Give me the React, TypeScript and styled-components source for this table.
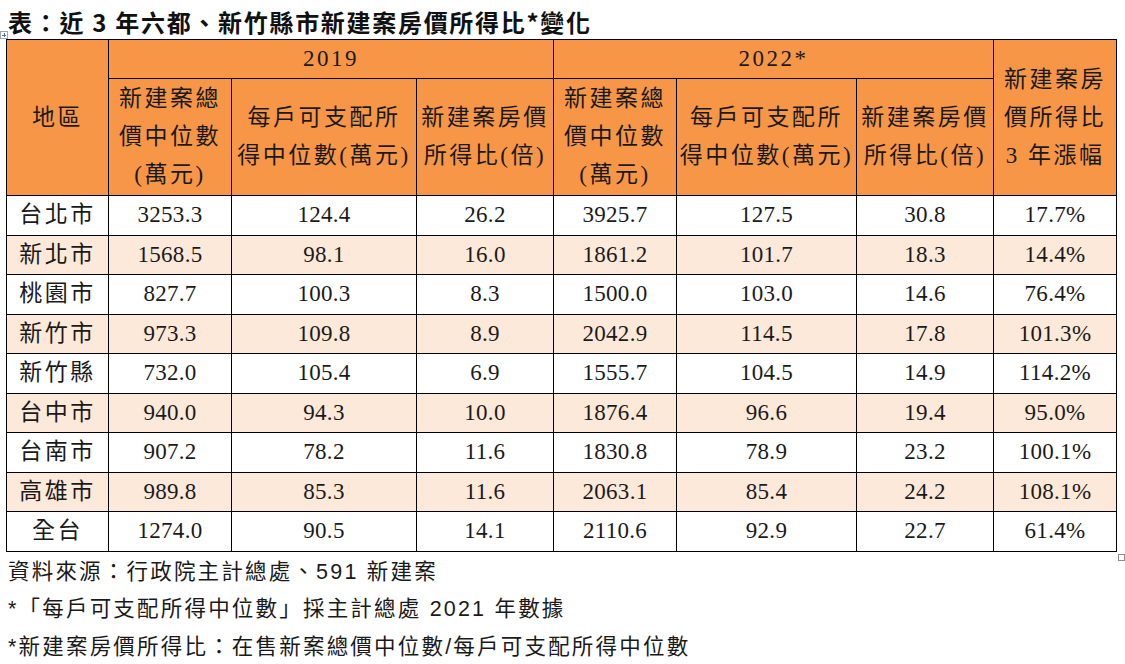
import React from "react";
import styled, { createGlobalStyle } from "styled-components";

const Global = createGlobalStyle`
  html, body { margin: 0; padding: 0; background: #fff; }
  body { width: 1125px; height: 664px; overflow: hidden; }
`;

const serif = `"Liberation Serif", "Noto Sans CJK TC", serif`;

const Page = styled.div`
  position: relative;
  width: 1125px;
  height: 664px;
  padding: 6px 0 0 6px;
  box-sizing: border-box;
  color: #1a1a1a;
`;

const Title = styled.h1`
  margin: 0;
  padding-left: 2px;
  height: 33px;
  font-family: "Noto Sans CJK TC", "Liberation Sans", sans-serif;
  font-size: 24px;
  line-height: 32px;
  font-weight: 700;
  letter-spacing: 1.7px;
  color: #111;
  white-space: nowrap;
`;

const TableWrap = styled.div`
  position: relative;
  width: 1110px;
`;

const Table = styled.table`
  border-collapse: collapse;
  table-layout: fixed;
  width: 1110px;
  font-family: ${serif};
  font-size: 23px;
  color: #1a1a1a;
`;

const Th = styled.th<{ $h?: number }>`
  background: #f79646;
  border: 1px solid #000;
  font-family: ${serif};
  font-size: 23px;
  font-weight: 400;
  text-align: center;
  vertical-align: middle;
  padding: 0;
  height: ${(p) => (p.$h ? `${p.$h}px` : "auto")};
  line-height: 38px;
  letter-spacing: 2.5px;
  white-space: nowrap;
`;

const Tr = styled.tr<{ $alt?: boolean }>`
  height: 39.5px;
  background: ${(p) => (p.$alt ? "#fde9d9" : "#ffffff")};
`;

const Td = styled.td<{ $label?: boolean }>`
  border: 1px solid #000;
  font-family: ${serif};
  font-size: 23px;
  font-weight: 400;
  text-align: center;
  vertical-align: middle;
  padding: 0;
  line-height: 36px;
  letter-spacing: ${(p) => (p.$label ? "2.5px" : "0.3px")};
  white-space: nowrap;
`;

const MoveHandle = styled.div`
  position: absolute;
  left: -6px;
  top: -8px;
  width: 6px;
  height: 6px;
  border: 1px solid #9aa7b8;
  background: #fff;
  &::before, &::after {
    content: "";
    position: absolute;
    background: #4a6fa5;
  }
  &::before { left: 2.5px; top: 1px; width: 1px; height: 4px; }
  &::after { top: 2.5px; left: 1px; height: 1px; width: 4px; }
`;

const ResizeHandle = styled.div`
  position: absolute;
  right: -9px;
  bottom: -9px;
  width: 5px;
  height: 5px;
  border: 1px solid #8a8a8a;
  background: #fff;
`;

const Notes = styled.div`
  display: flex;
  flex-direction: column;
  padding: 2px 0 0 2px;
  font-family: "Liberation Sans", "Noto Sans CJK TC", sans-serif;
  font-size: 21.5px;
  line-height: 37.5px;
  font-weight: 400;
  letter-spacing: 2.2px;
  color: #1a1a1a;
`;

const Note = styled.div`
  white-space: nowrap;
`;

const cols = [102, 123, 185, 137, 123, 180, 137, 123];

const rows: [string, string, string, string, string, string, string, string][] = [
  ["台北市", "3253.3", "124.4", "26.2", "3925.7", "127.5", "30.8", "17.7%"],
  ["新北市", "1568.5", "98.1", "16.0", "1861.2", "101.7", "18.3", "14.4%"],
  ["桃園市", "827.7", "100.3", "8.3", "1500.0", "103.0", "14.6", "76.4%"],
  ["新竹市", "973.3", "109.8", "8.9", "2042.9", "114.5", "17.8", "101.3%"],
  ["新竹縣", "732.0", "105.4", "6.9", "1555.7", "104.5", "14.9", "114.2%"],
  ["台中市", "940.0", "94.3", "10.0", "1876.4", "96.6", "19.4", "95.0%"],
  ["台南市", "907.2", "78.2", "11.6", "1830.8", "78.9", "23.2", "100.1%"],
  ["高雄市", "989.8", "85.3", "11.6", "2063.1", "85.4", "24.2", "108.1%"],
  ["全台", "1274.0", "90.5", "14.1", "2110.6", "92.9", "22.7", "61.4%"],
];

const Lines = ({ lines }: { lines: string[] }) => (
  <>
    {lines.map((l, i) => (
      <React.Fragment key={i}>
        {i > 0 && <br />}
        {l}
      </React.Fragment>
    ))}
  </>
);

const subHeads = [
  ["新建案總", "價中位數", "(萬元)"],
  ["每戶可支配所", "得中位數(萬元)"],
  ["新建案房價", "所得比(倍)"],
];

export default function App() {
  return (
    <>
      <Global />
      <Page>
        <Title>表：近 3 年六都、新竹縣市新建案房價所得比*變化</Title>
        <TableWrap>
          <MoveHandle />
          <Table>
            <colgroup>
              {cols.map((w, i) => (
                <col key={i} style={{ width: w }} />
              ))}
            </colgroup>
            <thead>
              <tr>
                <Th rowSpan={2}>地區</Th>
                <Th colSpan={3} $h={38}>2019</Th>
                <Th colSpan={3} $h={38}>2022*</Th>
                <Th rowSpan={2}>
                  <Lines lines={["新建案房", "價所得比", "3 年漲幅"]} />
                </Th>
              </tr>
              <tr>
                {[...subHeads, ...subHeads].map((h, i) => (
                  <Th key={i} $h={116}>
                    <Lines lines={h} />
                  </Th>
                ))}
              </tr>
            </thead>
            <tbody>
              {rows.map((r, i) => (
                <Tr key={r[0]} $alt={i % 2 === 1}>
                  {r.map((c, j) => (
                    <Td key={j} $label={j === 0}>
                      {c}
                    </Td>
                  ))}
                </Tr>
              ))}
            </tbody>
          </Table>
          <ResizeHandle />
        </TableWrap>
        <Notes>
          <Note>資料來源：行政院主計總處、591 新建案</Note>
          <Note>*「每戶可支配所得中位數」採主計總處 2021 年數據</Note>
          <Note>*新建案房價所得比：在售新案總價中位數/每戶可支配所得中位數</Note>
        </Notes>
      </Page>
    </>
  );
}
